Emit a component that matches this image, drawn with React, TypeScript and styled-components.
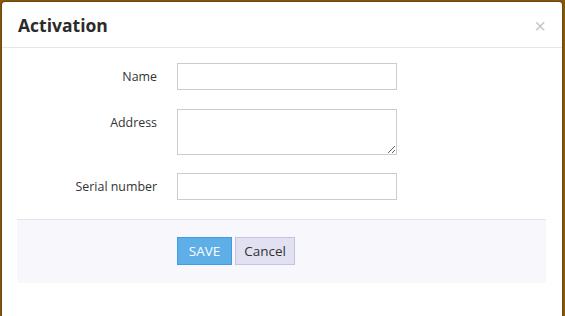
import React from "react";
import styled, { createGlobalStyle } from "styled-components";

const Global = createGlobalStyle`
  html, body { margin: 0; padding: 0; }
  body {
    background: #87590f;
    font-family: "Open Sans", "Noto Sans", "Liberation Sans", sans-serif;
    color: #333;
  }
  * { box-sizing: border-box; }
`;

const Frame = styled.div`
  height: 316px;
  padding: 2px 3px 0 2px;
  overflow: hidden;
`;

const Modal = styled.div`
  background: #fff;
  height: 330px;
  border-radius: 3px;
  box-shadow: 0 0 2px rgba(0, 0, 0, 0.7);
  display: flex;
  flex-direction: column;
`;

const Header = styled.div`
  height: 46px;
  border-bottom: 1px solid #e6e6e6;
  display: flex;
  align-items: center;
  justify-content: space-between;
  padding: 2px 16px 0 16px;
`;

const Title = styled.h3`
  margin: 0;
  font-size: 17.5px;
  font-weight: 700;
  color: #2b2b2b;
  line-height: 1;
`;

const Close = styled.span`
  font-size: 20px;
  color: #c8c8c8;
  line-height: 1;
  font-family: "Liberation Sans", sans-serif;
`;

const Body = styled.div`
  padding: 15px 15px 0 15px;
`;

const Form = styled.div`
  display: grid;
  grid-template-columns: 140px 220px;
  column-gap: 20px;
  row-gap: 18px;
  padding-bottom: 19px;
`;

const Label = styled.label<{ $top?: boolean }>`
  text-align: right;
  font-size: 12.4px;
  line-height: ${(p) => (p.$top ? "14px" : "27px")};
  padding-top: ${(p) => (p.$top ? "8px" : "0")};
  color: #333;
`;

const Input = styled.input`
  height: 27px;
  border: 1px solid #cccccc;
  border-radius: 0;
  padding: 4px 6px;
  font-family: inherit;
  font-size: 12px;
  outline: none;
`;

const TextArea = styled.textarea`
  height: 46px;
  margin-top: 1px;
  border: 1px solid #cccccc;
  border-radius: 0;
  padding: 4px 6px;
  font-family: inherit;
  font-size: 12px;
  outline: none;
  resize: both;
  display: block;
  width: 220px;
`;

const Footer = styled.div`
  border-top: 1px solid #e5e5e5;
  background: #f7f7fc;
  height: 64px;
  margin-right: 1px;
  padding: 17px 0 0 160px;
  display: flex;
  gap: 3px;
  align-items: flex-start;
`;

const Button = styled.button<{ $primary?: boolean }>`
  height: 28px;
  padding: 0 8px;
  font-family: inherit;
  font-size: 13.5px;
  border: 1px solid ${(p) => (p.$primary ? "#3f9be2" : "#c3c3e3")};
  background: ${(p) => (p.$primary ? "#5eafe8" : "#e1e1f1")};
  color: ${(p) => (p.$primary ? "#fff" : "#333")};
  border-radius: 0;
  cursor: pointer;
`;

export default function App() {
  return (
    <>
      <Global />
      <Frame>
        <Modal>
          <Header>
            <Title>Activation</Title>
            <Close>×</Close>
          </Header>
          <Body>
            <Form>
              <Label>Name</Label>
              <Input type="text" />
              <Label $top>Address</Label>
              <TextArea />
              <Label>Serial number</Label>
              <Input type="text" />
            </Form>
            <Footer>
              <Button $primary style={{ width: 55 }}>SAVE</Button>
              <Button style={{ width: 60 }}>Cancel</Button>
            </Footer>
          </Body>
        </Modal>
      </Frame>
    </>
  );
}
